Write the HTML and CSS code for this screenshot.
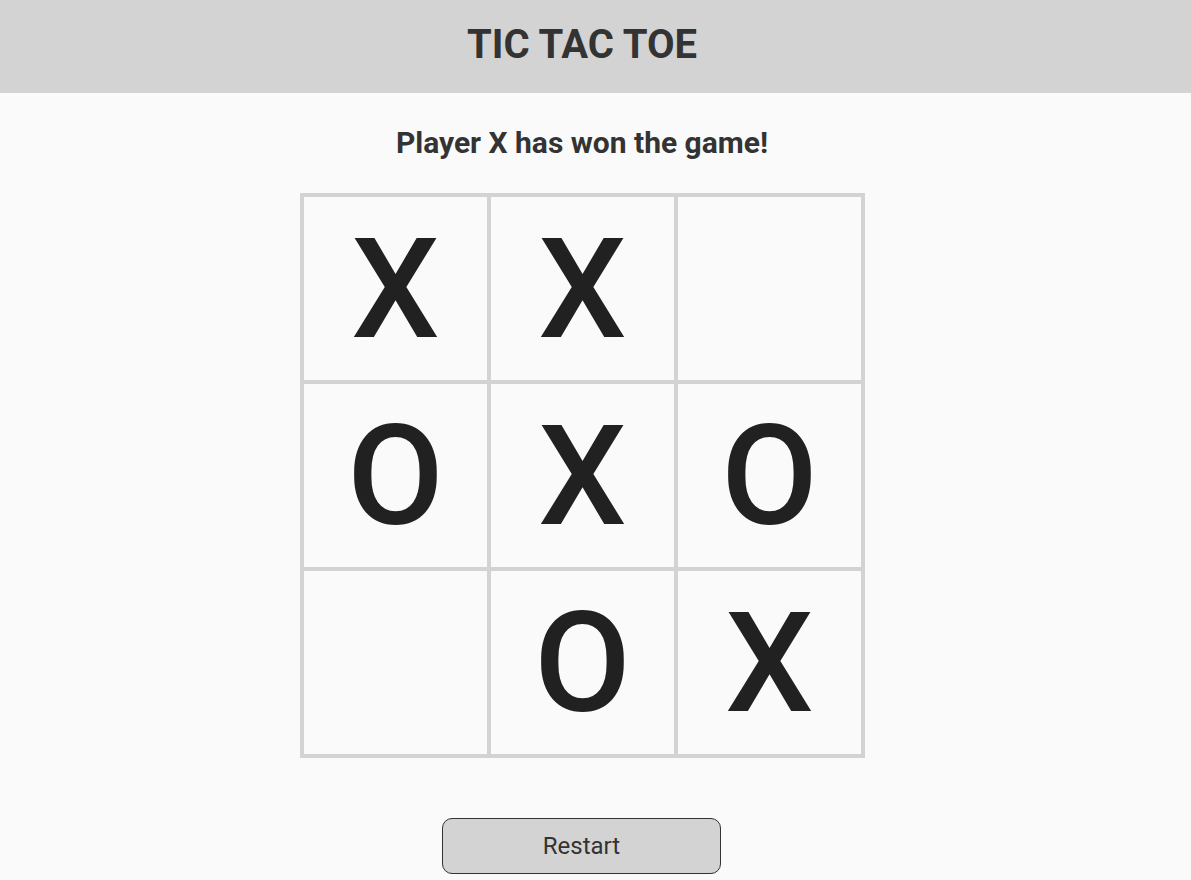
FILE: index.html
```html
<!DOCTYPE html>
<html lang="en">
<head>
<meta charset="utf-8">
<title>Tic Tac Toe</title>
<link rel="stylesheet" href="styles.css">
</head>
<body>
<header class="topbar">
  <div class="topbar-inner"><h1 class="title">TIC TAC TOE</h1></div>
</header>
<main class="game">
  <h2 class="status">Player X has won the game!</h2>
  <div class="board">
    <div class="cell">X</div>
    <div class="cell">X</div>
    <div class="cell"></div>
    <div class="cell">O</div>
    <div class="cell">X</div>
    <div class="cell">O</div>
    <div class="cell"></div>
    <div class="cell">O</div>
    <div class="cell">X</div>
  </div>
  <button class="restart" type="button">Restart</button>
</main>
</body>
</html>
```
FILE: styles.css
```css
html, body {
  margin: 0;
  padding: 0;
}
body {
  background: #fafafa;
  font-family: Roboto, "Liberation Sans", sans-serif;
  color: #333333;
}
.topbar {
  background: #d3d3d3;
  height: 93px;
}
.topbar-inner {
  width: 1164px;
  height: 90px;
  display: flex;
  align-items: center;
  justify-content: center;
}
.title {
  margin: 0;
  font-size: 40px;
  font-weight: 700;
  color: #333333;
  line-height: 1;
}
.game {
  width: 1164px;
  display: flex;
  flex-direction: column;
  align-items: center;
}
.status {
  margin: 33px 0 0 0;
  font-size: 30px;
  font-weight: 700;
  line-height: 34px;
  color: #333333;
}
.board {
  margin-top: 33px;
  margin-left: 1px;
  display: grid;
  grid-template-columns: repeat(3, 183px);
  grid-template-rows: repeat(3, 183px);
  gap: 4px;
  padding: 4px;
  background: #d3d3d3;
}
.cell {
  background: #fafafa;
  display: flex;
  align-items: center;
  justify-content: center;
  font-size: 140px;
  font-weight: 500;
  color: #212121;
  line-height: 1;
}
.restart {
  margin-top: 60px;
  margin-right: 1px;
  width: 279px;
  height: 56px;
  background: #d3d3d3;
  border: 1px solid #333333;
  border-radius: 10px;
  font-family: Roboto, "Liberation Sans", sans-serif;
  font-size: 24px;
  color: #333333;
  padding: 0;
}
```
